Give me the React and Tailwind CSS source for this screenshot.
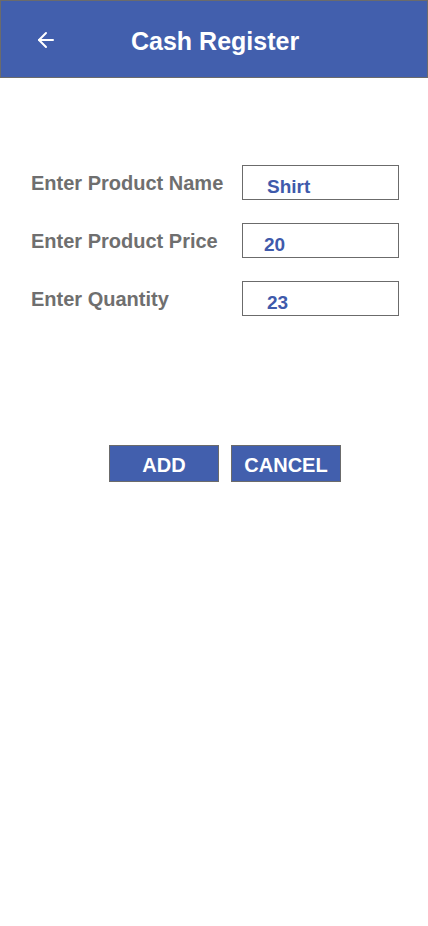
import React from 'react';
import { ArrowLeft } from 'lucide-react';

const fields = [
  { label: 'Enter Product Name', value: 'Shirt', pad: 'pl-[24px]' },
  { label: 'Enter Product Price', value: '20', pad: 'pl-[21px]' },
  { label: 'Enter Quantity', value: '23', pad: 'pl-[24px]' },
];

// 表单行
const FieldRow = ({ label, value, pad }) => (
  <div className="flex items-center h-[35px]">
    <label className="w-[211px] text-[20px] font-bold text-[#6f6f6f] leading-none">
      {label}
    </label>
    <div
      className={`w-[157px] h-[35px] border border-[#6b6b6b] flex items-center ${pad} pt-[7px] text-[19px] font-bold text-[#3f5aab] leading-none`}
    >
      {value}
    </div>
  </div>
);

export default function App() {
  return (
    <div
      className="w-[428px] min-h-[926px] bg-white"
      style={{ fontFamily: '"Liberation Sans", Arial, sans-serif' }}
    >
      {/* 顶部栏 */}
      <header className="h-[78px] bg-[#425fad] border border-[#6b6b6b] flex items-center">
        <ArrowLeft className="ml-[33px] mt-[2px] text-white" size={24} strokeWidth={2} />
        <h1 className="ml-[73px] pt-[4px] text-[25px] font-bold text-white leading-none">
          Cash Register
        </h1>
      </header>

      <main className="pt-[87px] pl-[31px]">
        <div className="flex flex-col gap-[23px]">
          {fields.map((f) => (
            <FieldRow key={f.label} {...f} />
          ))}
        </div>

        <div className="flex gap-[12px] ml-[78px] mt-[129px]">
          <button className="w-[110px] h-[37px] pt-[2px] bg-[#425fad] border border-[#6b6b6b] text-white text-[20px] font-bold leading-none">
            ADD
          </button>
          <button className="w-[110px] h-[37px] pt-[2px] bg-[#425fad] border border-[#6b6b6b] text-white text-[20px] font-bold leading-none">
            CANCEL
          </button>
        </div>
      </main>
    </div>
  );
}
